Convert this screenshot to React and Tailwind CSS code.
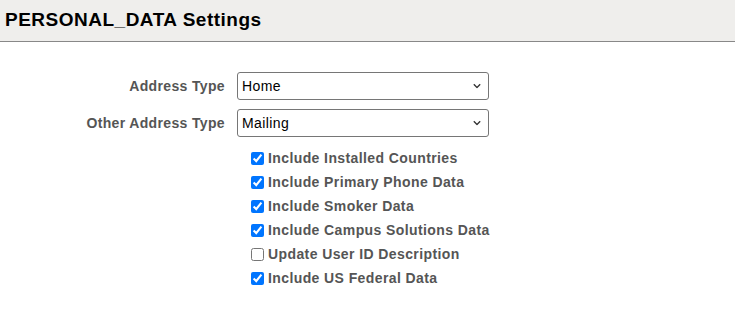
import { useState } from "react";

const options = [
  { label: "Include Installed Countries", checked: true },
  { label: "Include Primary Phone Data", checked: true },
  { label: "Include Smoker Data", checked: true },
  { label: "Include Campus Solutions Data", checked: true },
  { label: "Update User ID Description", checked: false },
  { label: "Include US Federal Data", checked: true },
];

const Chevron = () => (
  <svg width="8" height="5" viewBox="0 0 8 5" className="pointer-events-none absolute right-[8px] top-1/2 -translate-y-1/2">
    <path d="M0.8 0.8l3.2 3.2 3.2-3.2" fill="none" stroke="#333" strokeWidth="1.3" />
  </svg>
);

const SelectBox = ({ value, items }) => (
  <div className="relative w-[252px]">
    <select
      defaultValue={value}
      className="w-full h-[28px] appearance-none rounded-[3px] border border-[#767676] bg-white pl-[4px] text-[14px] tracking-[0.4px] text-black"
    >
      {items.map((it) => (
        <option key={it}>{it}</option>
      ))}
    </select>
    <Chevron />
  </div>
);

export default function App() {
  const [checks, setChecks] = useState(options.map((o) => o.checked));

  return (
    <div className="min-h-[318px] bg-white font-['Liberation_Sans',Arial,sans-serif]">
      {/* header */}
      <div className="h-[42px] bg-[#efeeec] border-b border-[#888] flex items-center px-[5px]">
        <h1 className="text-[19px] font-bold tracking-[0.5px] text-black">PERSONAL_DATA Settings</h1>
      </div>

      <div className="pt-[30px] grid grid-cols-[225px_auto] gap-x-[12px] gap-y-[9px] items-center">
        <label className="text-right text-[14px] font-bold tracking-[0.35px] text-[#555]">Address Type</label>
        <SelectBox value="Home" items={["Home", "Mailing", "Business"]} />
        <label className="text-right text-[14px] font-bold tracking-[0.35px] text-[#555]">Other Address Type</label>
        <SelectBox value="Mailing" items={["Home", "Mailing", "Business"]} />
      </div>

      <div className="pl-[251px] pt-[9px] flex flex-col">
        {options.map((o, i) => (
          <label key={o.label} className="h-[24px] flex items-center gap-[4px] text-[14px] font-bold tracking-[0.4px] text-[#555]">
            <input
              type="checkbox"
              checked={checks[i]}
              onChange={() => setChecks((c) => c.map((v, j) => (j === i ? !v : v)))}
              className="m-0 w-[13px] h-[13px] accent-[#0075ff]"
            />
            {o.label}
          </label>
        ))}
      </div>
    </div>
  );
}
